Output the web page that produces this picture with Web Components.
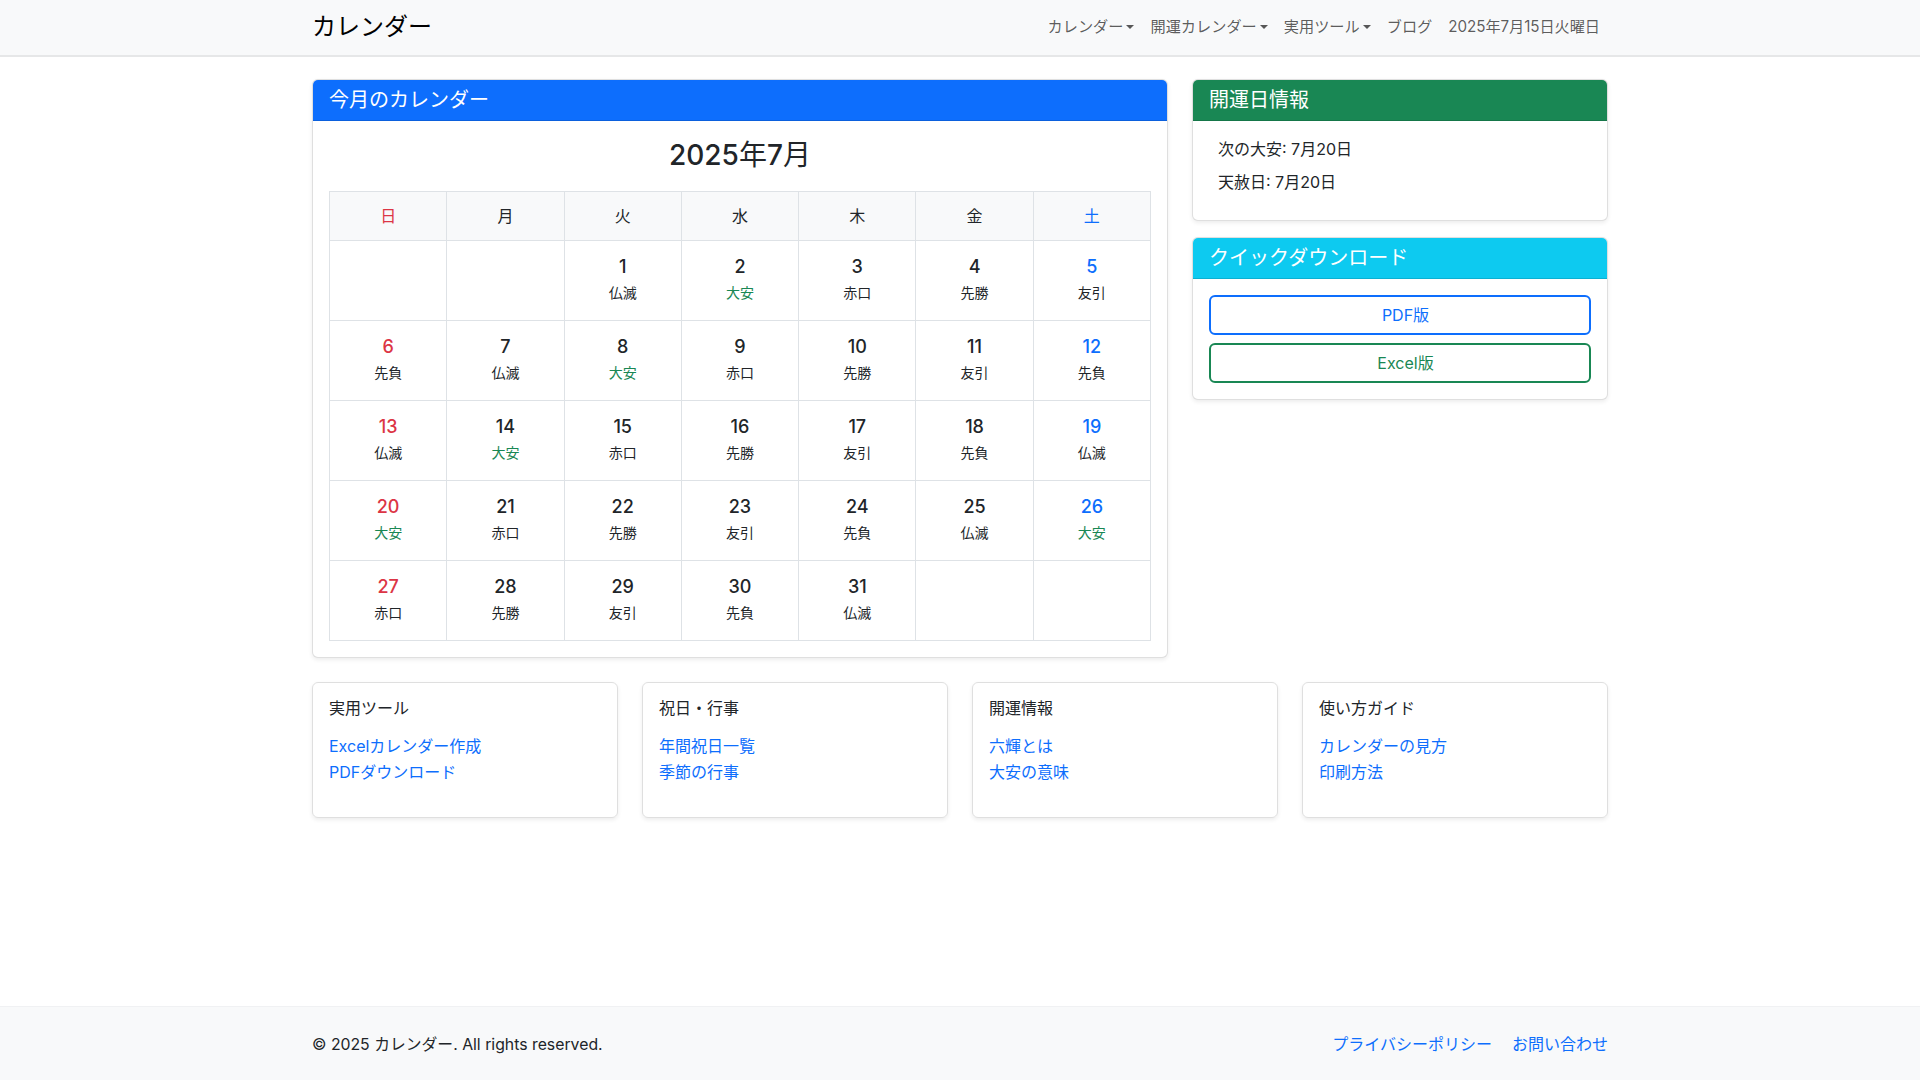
<!DOCTYPE html>
<html lang="ja">
<head>
<meta charset="utf-8">
<title>カレンダー</title>
<style>
  html, body { margin: 0; height: 100%; }
  body {
    font-family: Inter, "Noto Sans CJK JP", sans-serif;
    font-size: 16px;
    line-height: 1.5;
    color: #212529;
    background: #fff;
    display: flex;
    flex-direction: column;
    min-height: 1080px;
    box-sizing: border-box;
  }
</style>
</head>
<body>
  <site-navbar brand="カレンダー">
    <nav-item caret>カレンダー</nav-item>
    <nav-item caret>開運カレンダー</nav-item>
    <nav-item caret>実用ツール</nav-item>
    <nav-item>ブログ</nav-item>
    <nav-item style="letter-spacing:-.06px">2025年7月15日火曜日</nav-item>
  </site-navbar>

  <main-layout>
    <info-card slot="main" color="#0d6efd">
      <span slot="title">今月のカレンダー</span>
      <month-calendar></month-calendar>
    </info-card>

    <info-card slot="side" color="#198754">
      <span slot="title">開運日情報</span>
      <lucky-days></lucky-days>
    </info-card>
    <info-card slot="side" color="#0dcaf0">
      <span slot="title">クイックダウンロード</span>
      <outline-button color="#0d6efd">PDF版</outline-button>
      <outline-button color="#198754">Excel版</outline-button>
    </info-card>

    <link-card slot="links" heading="実用ツール">
      <a href="#">Excelカレンダー作成</a>
      <a href="#">PDFダウンロード</a>
    </link-card>
    <link-card slot="links" heading="祝日・行事">
      <a href="#">年間祝日一覧</a>
      <a href="#">季節の行事</a>
    </link-card>
    <link-card slot="links" heading="開運情報">
      <a href="#">六輝とは</a>
      <a href="#">大安の意味</a>
    </link-card>
    <link-card slot="links" heading="使い方ガイド">
      <a href="#">カレンダーの見方</a>
      <a href="#">印刷方法</a>
    </link-card>
  </main-layout>

  <site-footer>
    <span>© 2025 カレンダー. All rights reserved.</span>
    <a slot="links" href="#">プライバシーポリシー</a>
    <a slot="links" href="#">お問い合わせ</a>
  </site-footer>

<script>
// navbar
class SiteNavbar extends HTMLElement {
  connectedCallback() {
    this.attachShadow({ mode: 'open' });
    this.shadowRoot.innerHTML = `
      <style>
        :host {
          display: block;
          background: #f8f9fa;
          box-shadow: 0 2px 0 #e6e7e8;
        }
        .inner {
          width: 1296px;
          height: 55px;
          margin: 0 auto;
          display: flex;
          align-items: center;
          justify-content: space-between;
        }
        .brand { font-size: 24px; color: #000; line-height: 36px; margin-top: -1px; }
        .nav { display: flex; padding-right: 0; }
      </style>
      <div class="inner">
        <div class="brand">${this.getAttribute('brand')}</div>
        <div class="nav"><slot></slot></div>
      </div>`;
  }
}

class NavItem extends HTMLElement {
  connectedCallback() {
    this.attachShadow({ mode: 'open' });
    const caret = this.hasAttribute('caret') ? '<i></i>' : '';
    this.shadowRoot.innerHTML = `
      <style>
        :host {
          display: block;
          padding: 8px;
          font-size: 15.2px;
          color: rgba(0,0,0,.65);
        }
        div { display: flex; align-items: center; }
        i {
          width: 0; height: 0;
          margin-left: 3px;
          margin-top: -1px;
          border-top: 4.5px solid currentColor;
          border-left: 4.5px solid transparent;
          border-right: 4.5px solid transparent;
        }
      </style>
      <div><slot></slot>${caret}</div>`;
  }
}

// two columns and the row of link cards
class MainLayout extends HTMLElement {
  connectedCallback() {
    this.attachShadow({ mode: 'open' });
    this.shadowRoot.innerHTML = `
      <style>
        :host { display: block; flex: 1; }
        .wrap {
          width: 1296px;
          margin: 0 auto;
          padding-top: 24px;
          display: grid;
          grid-template-columns: 856px 416px;
          gap: 24px;
        }
        .side { display: flex; flex-direction: column; gap: 16px; }
        .links {
          grid-column: 1 / -1;
          display: grid;
          grid-template-columns: repeat(4, 306px);
          gap: 24px;
        }
      </style>
      <div class="wrap">
        <div><slot name="main"></slot></div>
        <div class="side"><slot name="side"></slot></div>
        <div class="links"><slot name="links"></slot></div>
      </div>`;
  }
}

class InfoCard extends HTMLElement {
  connectedCallback() {
    this.attachShadow({ mode: 'open' });
    this.shadowRoot.innerHTML = `
      <style>
        :host {
          display: block;
          border: 1px solid rgba(0,0,0,.125);
          border-radius: 6px;
          box-shadow: 0 2px 4px rgba(0,0,0,.075);
          background: #fff;
        }
        .head {
          background: ${this.getAttribute('color')};
          color: #fff;
          font-size: 20px;
          line-height: 24px;
          padding: 8px 16px;
          border-bottom: 1px solid rgba(0,0,0,.125);
          border-radius: 5px 5px 0 0;
        }
        .body { padding: 16px; display: flex; flex-direction: column; gap: 8px; }
      </style>
      <div class="head"><slot name="title"></slot></div>
      <div class="body"><slot></slot></div>`;
  }
}

// rokuyo for July 2025, which starts on a Tuesday
const JULY = [
  '仏滅','大安','赤口','先勝','友引',
  '先負','仏滅','大安','赤口','先勝','友引','先負',
  '仏滅','大安','赤口','先勝','友引','先負','仏滅',
  '大安','赤口','先勝','友引','先負','仏滅','大安',
  '赤口','先勝','友引','先負','仏滅'
];

class MonthCalendar extends HTMLElement {
  connectedCallback() {
    this.attachShadow({ mode: 'open' });
    const days = ['日', '月', '火', '水', '木', '金', '土'];
    const head = days.map((d, i) =>
      `<th class="${i === 0 ? 'sun' : i === 6 ? 'sat' : ''}">${d}</th>`).join('');

    let rows = '';
    let cells = '<td></td><td></td>';
    let col = 2;
    JULY.forEach((r, idx) => {
      const cls = col === 0 ? 'sun' : col === 6 ? 'sat' : '';
      const rk = r === '大安' ? 'rk taian' : 'rk';
      cells += `<td><div class="d ${cls}">${idx + 1}</div><div class="${rk}">${r}</div></td>`;
      col++;
      if (col === 7) {
        rows += `<tr>${cells}</tr>`;
        cells = '';
        col = 0;
      }
    });
    rows += `<tr>${cells}<td></td><td></td></tr>`;

    this.shadowRoot.innerHTML = `
      <style>
        :host { display: block; }
        h3 {
          margin: 0 0 18.4px;
          font-size: 28px;
          font-weight: 500;
          line-height: 1.2;
          text-align: center;
          color: #212529;
          padding-top: 2px;
        }
        h3 span { font-weight: 400; }
        table {
          width: 100%;
          table-layout: fixed;
          border-collapse: collapse;
          text-align: center;
        }
        th, td { border: 1px solid #dee2e6; }
        th {
          height: 48px;
          background: #f8f9fa;
          font-weight: 400;
          font-size: 16px;
          padding: 0;
        }
        td { height: 80px; padding: 12px 0 0; vertical-align: top; box-sizing: border-box; }
        .d { font-size: 18px; line-height: 27px; font-weight: 500; color: #212529; }
        .rk { font-size: 14px; line-height: 21px; margin-top: 2px; }
        .taian { color: #198754; }
        .sun, .d.sun { color: #dc3545; }
        .sat, .d.sat { color: #0d6efd; }
      </style>
      <h3>2025<span>年</span>7<span>月</span></h3>
      <table>
        <thead><tr>${head}</tr></thead>
        <tbody>${rows}</tbody>
      </table>`;
  }
}

class LuckyDays extends HTMLElement {
  connectedCallback() {
    this.attachShadow({ mode: 'open' });
    this.shadowRoot.innerHTML = `
      <style>
        :host { display: block; padding: 0 0 10px 9px; height: 57px; }
        p { margin: 0 0 9px; line-height: 24px; }
      </style>
      <p>次の大安: 7月20日</p>
      <p>天赦日: 7月20日</p>`;
  }
}

class OutlineButton extends HTMLElement {
  connectedCallback() {
    this.attachShadow({ mode: 'open' });
    const color = this.getAttribute('color');
    this.shadowRoot.innerHTML = `
      <style>
        :host {
          display: block;
          border: 2px solid ${color};
          border-radius: 6px;
          color: ${color};
          text-align: center;
          padding: 6px 12px 6px 23px;
          line-height: 24px;
          font-size: 16px;
        }
      </style>
      <slot></slot>`;
  }
}

class LinkCard extends HTMLElement {
  connectedCallback() {
    this.attachShadow({ mode: 'open' });
    this.shadowRoot.innerHTML = `
      <style>
        :host {
          display: block;
          height: 136px;
          box-sizing: border-box;
          border: 1px solid rgba(0,0,0,.125);
          border-radius: 6px;
          box-shadow: 0 2px 4px rgba(0,0,0,.075);
          padding: 13px 16px;
        }
        h6 { margin: 0 0 13px; font-size: 16px; font-weight: 400; line-height: 24px; }
        ::slotted(a) {
          display: block;
          color: #0d6efd;
          text-decoration: none;
          line-height: 26.5px;
        }
      </style>
      <h6>${this.getAttribute('heading')}</h6>
      <slot></slot>`;
  }
}

class SiteFooter extends HTMLElement {
  connectedCallback() {
    this.attachShadow({ mode: 'open' });
    this.shadowRoot.innerHTML = `
      <style>
        :host {
          display: block;
          background: #f8f9fa;
          border-top: 1px solid #f0f1f3;
        }
        .inner {
          width: 1296px;
          height: 73px;
          margin: 0 auto;
          display: flex;
          align-items: center;
          justify-content: space-between;
        }
        .copy { font-size: 15.8px; padding-top: 3px; }
        .links { display: flex; gap: 20px; }
        ::slotted(a) { color: #0d6efd; text-decoration: none; }
      </style>
      <div class="inner">
        <div class="copy"><slot></slot></div>
        <div class="links"><slot name="links"></slot></div>
      </div>`;
  }
}

customElements.define('site-navbar', SiteNavbar);
customElements.define('nav-item', NavItem);
customElements.define('main-layout', MainLayout);
customElements.define('info-card', InfoCard);
customElements.define('month-calendar', MonthCalendar);
customElements.define('lucky-days', LuckyDays);
customElements.define('outline-button', OutlineButton);
customElements.define('link-card', LinkCard);
customElements.define('site-footer', SiteFooter);
</script>
</body>
</html>
